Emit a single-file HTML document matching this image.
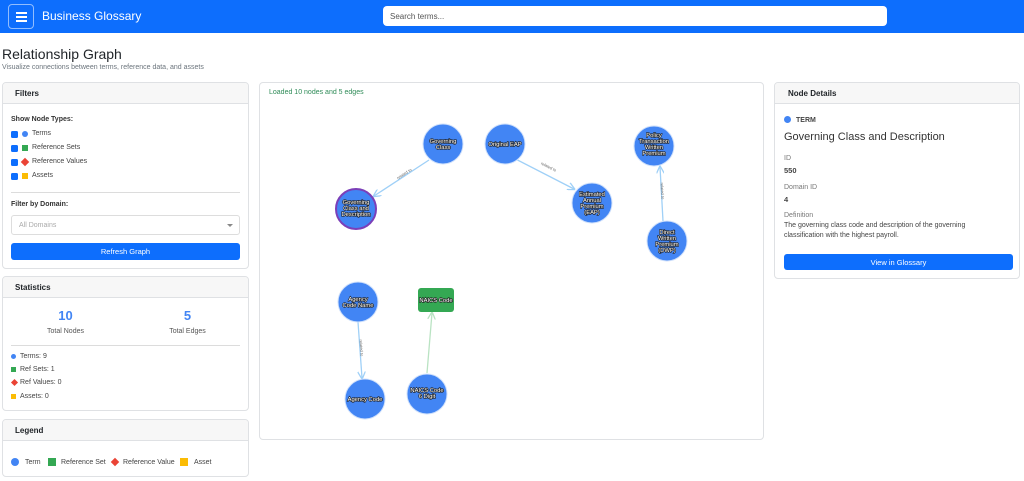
<!DOCTYPE html>
<html><head><meta charset="utf-8"><style>
*{box-sizing:border-box;margin:0;padding:0}
body{width:1024px;height:481px;overflow:hidden;background:#fff;font-family:"Liberation Sans",sans-serif;color:#212529;position:relative}
.nav{position:absolute;left:0;top:0;width:1024px;height:33px;background:#0d6efd}
.burger{position:absolute;left:8px;top:4px;width:26px;height:25px;border:1px solid rgba(255,255,255,.55);border-radius:4px}
.burger i{position:absolute;left:7px;width:11px;height:2px;background:#fff}
.brand{position:absolute;left:42px;top:9px;color:#fff;font-size:12px}
.search{position:absolute;left:383px;top:6px;width:504px;height:20px;background:#fff;border-radius:4px;font-size:8px;color:#555;padding:6px 7px}
h1{position:absolute;left:2px;top:46px;font-size:14px;font-weight:normal}
.sub{position:absolute;left:2px;top:64px;font-size:7px;color:#6c757d}
.card{position:absolute;border:1px solid #dfe1e4;border-radius:4px;background:#fff;overflow:hidden}
.ch{height:21px;background:#f7f7f7;border-bottom:1px solid #dfe1e4;font-size:8px;font-weight:bold;padding:6px 12px}
.t{position:absolute;font-size:7px;color:#444;white-space:nowrap}
.cb{position:absolute;width:7px;height:7px;background:#0d6efd;border-radius:1.5px}
.btn{position:absolute;background:#0d6efd;color:#fff;border-radius:3px;font-size:7.5px;text-align:center}
.hr{position:absolute;height:1px;background:#dcdcdc}
</style></head><body>
<div class="nav"><div class="burger"><i style="top:7px"></i><i style="top:11px"></i><i style="top:15px"></i></div><div class="brand">Business Glossary</div><div class="search">Search terms...</div></div>
<h1>Relationship Graph</h1>
<div class="sub">Visualize connections between terms, reference data, and assets</div>

<div class="card" style="left:2px;top:82px;width:247px;height:187px">
<div class="ch">Filters</div>
<div class="t" style="left:8px;top:33px;font-weight:bold;color:#333">Show Node Types:</div>
<div class="cb" style="left:8px;top:48px"></div><div style="position:absolute;left:19px;top:48px;width:6px;height:6px;border-radius:50%;background:#4285f4"></div><div class="t" style="left:29px;top:47px">Terms</div>
<div class="cb" style="left:8px;top:62px"></div><div style="position:absolute;left:19px;top:62px;width:6px;height:6px;background:#34a853"></div><div class="t" style="left:29px;top:61px">Reference Sets</div>
<div class="cb" style="left:8px;top:76px"></div><div style="position:absolute;left:19px;top:76px;width:6px;height:6px;background:#ea4335;transform:rotate(45deg)"></div><div class="t" style="left:29px;top:75px">Reference Values</div>
<div class="cb" style="left:8px;top:90px"></div><div style="position:absolute;left:19px;top:90px;width:6px;height:6px;background:#fbbc05"></div><div class="t" style="left:29px;top:89px">Assets</div>
<div class="hr" style="left:8px;top:109px;width:229px"></div>
<div class="t" style="left:8px;top:118px;font-weight:bold;color:#333">Filter by Domain:</div>
<div style="position:absolute;left:8px;top:132px;width:229px;height:20px;border:1px solid #ddd;border-radius:3px"><div class="t" style="left:7px;top:6px;color:#aaa">All Domains</div><div style="position:absolute;right:6px;top:8px;border:3px solid transparent;border-top:3px solid #888"></div></div>
<div class="btn" style="left:8px;top:160px;width:229px;height:17px;padding-top:4px">Refresh Graph</div>
</div>

<div class="card" style="left:2px;top:276px;width:247px;height:135px">
<div class="ch">Statistics</div>
<div style="position:absolute;left:0;width:125px;top:31px;text-align:center;color:#4285f4;font-weight:bold;font-size:13px">10</div>
<div class="t" style="left:0;width:125px;text-align:center;top:51px;color:#555">Total Nodes</div>
<div style="position:absolute;left:122px;width:125px;top:31px;text-align:center;color:#4285f4;font-weight:bold;font-size:13px">5</div>
<div class="t" style="left:122px;width:125px;text-align:center;top:51px;color:#555">Total Edges</div>
<div class="hr" style="left:8px;top:68px;width:229px"></div>
<div style="position:absolute;left:8px;top:77px;width:5px;height:5px;border-radius:50%;background:#4285f4"></div><div class="t" style="left:17px;top:76px">Terms: 9</div>
<div style="position:absolute;left:8px;top:90px;width:5px;height:5px;background:#34a853"></div><div class="t" style="left:17px;top:89px">Ref Sets: 1</div>
<div style="position:absolute;left:9px;top:103px;width:5px;height:5px;background:#ea4335;transform:rotate(45deg)"></div><div class="t" style="left:17px;top:102px">Ref Values: 0</div>
<div style="position:absolute;left:8px;top:117px;width:5px;height:5px;background:#fbbc05"></div><div class="t" style="left:17px;top:116px">Assets: 0</div>
</div>

<div class="card" style="left:2px;top:419px;width:247px;height:58px">
<div class="ch">Legend</div>
<div style="position:absolute;left:8px;top:38px;width:8px;height:8px;border-radius:50%;background:#4285f4"></div><div class="t" style="left:22px;top:39px">Term</div>
<div style="position:absolute;left:45px;top:38px;width:8px;height:8px;background:#34a853"></div><div class="t" style="left:58px;top:39px">Reference Set</div>
<div style="position:absolute;left:109px;top:39px;width:6px;height:6px;background:#ea4335;transform:rotate(45deg)"></div><div class="t" style="left:120px;top:39px">Reference Value</div>
<div style="position:absolute;left:177px;top:38px;width:8px;height:8px;background:#fbbc05"></div><div class="t" style="left:191px;top:39px">Asset</div>
</div>

<div class="card" style="left:259px;top:82px;width:505px;height:358px">
<div class="t" style="left:9px;top:6px;color:#2e8b57">Loaded 10 nodes and 5 edges</div>
<svg width="505" height="358" style="position:absolute;left:0;top:0" font-family="Liberation Sans" font-size="5.8" text-anchor="middle">
<defs><marker id="a" markerWidth="6" markerHeight="6" refX="5" refY="3" orient="auto"><path d="M0,0 L6,3 L0,6" fill="none" stroke="#9fd0f7" stroke-width="1"/></marker>
<marker id="g" markerWidth="6" markerHeight="6" refX="5" refY="3" orient="auto"><path d="M0,0 L6,3 L0,6" fill="none" stroke="#b9e3c2" stroke-width="1"/></marker></defs>
<g stroke="#9fd0f7" stroke-width="1.3" fill="none">
<line x1="169" y1="77" x2="114" y2="113" marker-end="url(#a)"/><line x1="242" y1="69" x2="314" y2="106" marker-end="url(#a)"/><line x1="403" y1="138" x2="400" y2="84" marker-end="url(#a)"/><line x1="98" y1="239" x2="102" y2="295" marker-end="url(#a)"/>
</g>
<line x1="167" y1="290" x2="172" y2="230" stroke="#b9e3c2" stroke-width="1.3" marker-end="url(#g)"/>
<g fill="#4285f4" stroke="#cfe0fb" stroke-width="1">
<circle cx="183" cy="61" r="20"/><circle cx="245" cy="61" r="20"/><circle cx="394" cy="63" r="20"/><circle cx="332" cy="120" r="20"/><circle cx="407" cy="158" r="20"/><circle cx="98" cy="219" r="20"/><circle cx="105" cy="316" r="20"/><circle cx="167" cy="311" r="20"/>
<circle cx="96" cy="126" r="20" stroke="#7b3fb8" stroke-width="2"/>
</g>
<rect x="158" y="205" width="36" height="24" rx="3" fill="#34a853"/>
<g fill="#fff" stroke="#222" stroke-width="1.3" paint-order="stroke">
<text x="183" y="60">Governing</text><text x="183" y="66">Class</text>
<text x="245" y="63">Original EAP</text>
<text x="394" y="54">Policy</text><text x="394" y="60">Transaction</text><text x="394" y="66">Written</text><text x="394" y="72">Premium</text>
<text x="332" y="113">Estimated</text><text x="332" y="119">Annual</text><text x="332" y="125">Premium</text><text x="332" y="131">(EAP)</text>
<text x="407" y="151">Direct</text><text x="407" y="157">Written</text><text x="407" y="163">Premium</text><text x="407" y="169">(DWP)</text>
<text x="96" y="121">Governing</text><text x="96" y="127">Class and</text><text x="96" y="133">Description</text>
<text x="98" y="218">Agency</text><text x="98" y="224">Code Name</text>
<text x="105" y="318">Agency Code</text>
<text x="167" y="309">NAICS Code</text><text x="167" y="315">6 Digit</text>
<text x="176" y="219">NAICS Code</text>
</g>
<g fill="#666" font-size="4"><text x="145" y="92" transform="rotate(-33 145 92)">related to</text><text x="288" y="85" transform="rotate(27 288 85)">related to</text><text x="401" y="108" transform="rotate(87 401 108)">related to</text><text x="100" y="265" transform="rotate(86 100 265)">related to</text></g>
</svg>
</div>

<div class="card" style="left:774px;top:82px;width:246px;height:197px">
<div class="ch" style="padding-left:13px">Node Details</div>
<div style="position:absolute;left:9px;top:33px;width:7px;height:7px;border-radius:50%;background:#4285f4"></div>
<div class="t" style="left:21px;top:34px;font-weight:bold;color:#444">TERM</div>
<div style="position:absolute;left:9px;top:48px;font-size:11px;color:#333">Governing Class and Description</div>
<div class="t" style="left:9px;top:72px;color:#777">ID</div>
<div class="t" style="left:9px;top:83px;font-weight:bold;font-size:7.5px">550</div>
<div class="t" style="left:9px;top:101px;color:#777">Domain ID</div>
<div class="t" style="left:9px;top:112px;font-weight:bold;font-size:7.5px">4</div>
<div class="t" style="left:9px;top:129px;color:#777">Definition</div>
<div class="t" style="left:9px;top:139px">The governing class code and description of the governing</div>
<div class="t" style="left:9px;top:149px">classification with the highest payroll.</div>
<div class="btn" style="left:9px;top:171px;width:229px;height:16px;padding-top:4px">View in Glossary</div>
</div>
</body></html>
